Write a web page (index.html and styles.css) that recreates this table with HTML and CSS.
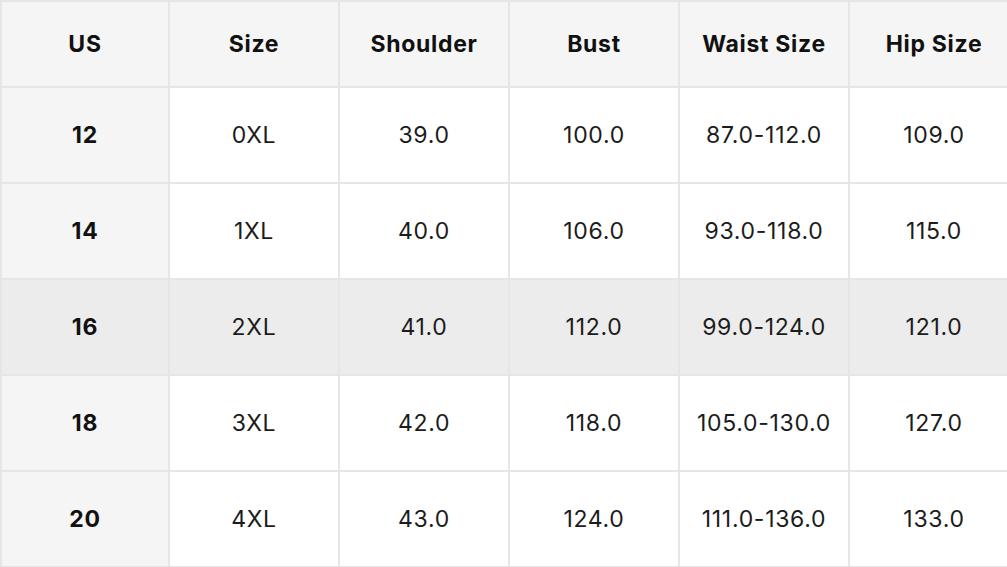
FILE: index.html
```html
<!DOCTYPE html>
<html>
<head>
<meta charset="utf-8">
<link rel="stylesheet" href="styles.css">
</head>
<body>
<div class="chart">
  <div class="row head">
    <div class="cell">US</div><div class="cell">Size</div><div class="cell">Shoulder</div><div class="cell">Bust</div><div class="cell">Waist Size</div><div class="cell">Hip Size</div>
  </div>
  <div class="row">
    <div class="cell key">12</div><div class="cell">0XL</div><div class="cell">39.0</div><div class="cell">100.0</div><div class="cell">87.0-112.0</div><div class="cell">109.0</div>
  </div>
  <div class="row">
    <div class="cell key">14</div><div class="cell">1XL</div><div class="cell">40.0</div><div class="cell">106.0</div><div class="cell">93.0-118.0</div><div class="cell">115.0</div>
  </div>
  <div class="row hl">
    <div class="cell key">16</div><div class="cell">2XL</div><div class="cell">41.0</div><div class="cell">112.0</div><div class="cell">99.0-124.0</div><div class="cell">121.0</div>
  </div>
  <div class="row">
    <div class="cell key">18</div><div class="cell">3XL</div><div class="cell">42.0</div><div class="cell">118.0</div><div class="cell">105.0-130.0</div><div class="cell">127.0</div>
  </div>
  <div class="row">
    <div class="cell key">20</div><div class="cell">4XL</div><div class="cell">43.0</div><div class="cell">124.0</div><div class="cell">111.0-136.0</div><div class="cell">133.0</div>
  </div>
</div>
</body>
</html>
```
FILE: styles.css
```css
html, body {
  margin: 0;
  padding: 0;
  background: #ffffff;
  overflow: hidden;
}
body {
  font-family: Inter, "Noto Sans", sans-serif;
  font-size: 23px;
  letter-spacing: 0.7px;
  color: #1c1c1c;
}
.chart {
  width: 1020px;
  border-top: 2px solid #e6e6e6;
  border-left: 2px solid #e6e6e6;
  box-sizing: border-box;
}
.row {
  display: grid;
  grid-template-columns: 168px repeat(5, 170px);
  height: 96px;
}
.row.head {
  height: 86px;
  background: #f5f5f5;
}
.cell {
  display: flex;
  align-items: center;
  justify-content: center;
  border-right: 2px solid #e6e6e6;
  border-bottom: 2px solid #e6e6e6;
  box-sizing: border-box;
}
.head .cell {
  font-weight: 700;
  color: #111;
}
.cell.key {
  background: #f5f5f5;
  font-weight: 700;
  color: #111;
}
.row.hl .cell {
  background: #ececec;
}
```
